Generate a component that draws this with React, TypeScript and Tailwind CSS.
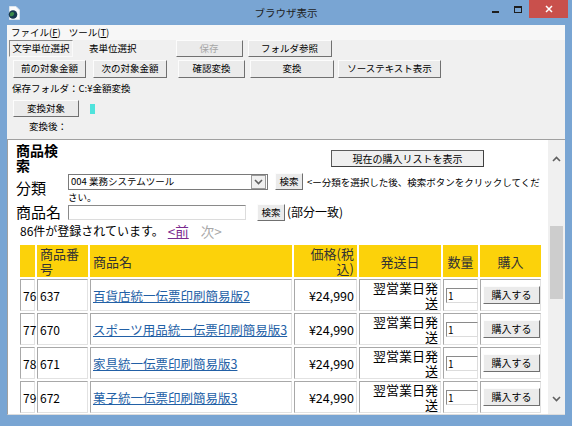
import React from 'react';

const btn3d =
  'border border-t-[#fcfcfc] border-l-[#fcfcfc] border-r-[#707070] border-b-[#707070] bg-[#ebebeb] flex items-center justify-center leading-none';

const items = [
  { no: 76, code: '637', name: '百貨店統一伝票印刷簡易版2' },
  { no: 77, code: '670', name: 'スポーツ用品統一伝票印刷簡易版3' },
  { no: 78, code: '671', name: '家具統一伝票印刷簡易版3' },
  { no: 79, code: '672', name: '菓子統一伝票印刷簡易版3' },
];

const cell = 'border border-t-[#a8a8a8] border-l-[#a8a8a8] border-r-[#e2e2e2] border-b-[#e2e2e2] px-[2px] align-middle';
const head = 'bg-[#fcd20a] border border-[#fcd20a] px-[2px] font-normal text-[#333] align-middle';

function Chevron({ up }: { up?: boolean }) {
  return (
    <svg width="9" height="6" viewBox="0 0 9 6">
      <path d={up ? 'M1 5L4.5 1.5L8 5' : 'M1 1L4.5 4.5L8 1'} fill="none" stroke="#606060" strokeWidth="1.6" />
    </svg>
  );
}

export default function App() {
  return (
    <div className="w-[572px] h-[426px] bg-[#79a5d3] flex flex-col overflow-hidden font-['Noto_Sans_CJK_JP',sans-serif] text-black">
      {/* title bar */}
      <div className="h-[25px] shrink-0 grid grid-cols-[1fr_auto_1fr]">
        <div className="flex items-start pt-[6px] pl-[8px]">
          <svg width="12" height="14" viewBox="0 0 12 14">
            <path d="M1.5 0.5h6.5l3.5 3.5v9.5h-10z" fill="#fbfbfb" stroke="#d9e4ee" />
            <circle cx="5" cy="8.5" r="4.3" fill="#17384f" />
            <path d="M2.2 7c1.2-1.3 2.8-1.4 3.6-0.4s0.3 2.6-1.2 3.3-2.6 0.4-2.7-0.9z" fill="#3b8a4a" />
          </svg>
        </div>
        <div className="text-[10.5px] text-[#1e1e1e] pt-[6px] leading-[13px]">ブラウザ表示</div>
        <div className="flex justify-end items-start pr-[4px]">
          <div className="w-[7px] h-[2px] bg-[#1e1e1e] mt-[11px]" />
          <div className="w-[8px] h-[7px] border border-[#1e1e1e] border-t-2 ml-[15px] mt-[6px]" />
          <div className="w-[39px] h-[18px] bg-[#c9504c] ml-[7px] flex items-center justify-center">
            <svg width="8" height="8" viewBox="0 0 8 8">
              <path d="M1 1L7 7M7 1L1 7" stroke="#fff" strokeWidth="1.5" />
            </svg>
          </div>
        </div>
      </div>

      {/* client */}
      <div className="mx-[7px] h-[390px] shrink-0 overflow-hidden bg-[#f0f0f0] flex flex-col text-[9.5px]">
        <div className="h-[15px] shrink-0 bg-[#f7f7f7] flex items-center pl-[4px] gap-[8px] text-[9.5px] leading-none">
          <span>ファイル(<span className="underline">F</span>)</span>
          <span>ツール(<span className="underline">T</span>)</span>
        </div>

        <div className="h-[17px] shrink-0 flex items-stretch">
          <div className="ml-[2px] w-[64px] border border-[#8a8a8a] border-r-[#fafafa] border-b-[#fafafa] flex items-center justify-center leading-none">文字単位選択</div>
          <div className="ml-[16px] flex items-center leading-none">表単位選択</div>
          <div className={`${btn3d} ml-[39px] w-[67px] text-[#a6a6a6]`}>保存</div>
          <div className={`${btn3d} ml-[5px] w-[84px]`}>フォルダ参照</div>
        </div>

        <div className="h-[18px] shrink-0 mt-[3px] flex">
          <div className={`${btn3d} ml-[6px] w-[73px]`}>前の対象金額</div>
          <div className={`${btn3d} ml-[7px] w-[74px]`}>次の対象金額</div>
          <div className={`${btn3d} ml-[11px] w-[67px]`}>確認変換</div>
          <div className={`${btn3d} ml-[5px] w-[84px]`}>変換</div>
          <div className={`${btn3d} ml-[4px] w-[103px]`}>ソーステキスト表示</div>
        </div>

        <div className="h-[15px] shrink-0 mt-[3px] pl-[5px] flex items-center leading-none">保存フォルダ：C:¥金額変換</div>

        <div className="h-[17px] shrink-0 mt-[4px] flex items-center">
          <div className={`${btn3d} ml-[6px] w-[66px] h-full`}>変換対象</div>
          <div className="ml-[11px] w-[5px] h-[10px] bg-[#4fe3dc]" />
        </div>

        <div className="h-[15px] shrink-0 mt-[2px] pl-[22px] flex items-center leading-none">変換後：</div>

        {/* browser pane */}
        <div className="mt-[5px] flex-1 min-h-0 overflow-hidden flex border-t border-l border-b border-[#a0a0a0] border-b-[#dcdcdc] bg-white">
          <div className="flex-1 min-w-0 overflow-hidden">
            <div className="flex pl-[8px] pt-[3px]">
              <div className="w-[48px] text-[14px] font-bold leading-[15px]">商品検索</div>
              <div className="ml-[267px] mt-[7px] w-[153px] h-[17px] border border-[#5a5a5a] border-r-[#404040] border-b-[#404040] bg-[#efefef] flex items-center justify-center text-[10px] leading-none">
                現在の購入リストを表示
              </div>
            </div>

            <div className="flex pl-[8px]">
              <div className="w-[52px] text-[15px] leading-[16px] pt-[7px]">分類</div>
              <div className="w-[473px] text-[9.5px] leading-[12px]">
                <span className="inline-flex align-middle w-[200px] h-[16px] border border-[#7a7a7a] bg-white items-center">
                  <span className="pl-[2px] flex-1 leading-none">004 業務システムツール</span>
                  <span className="w-[15px] h-[14px] mr-[1px] border border-[#9a9a9a] bg-[#f0f0f0] flex items-center justify-center">
                    <Chevron />
                  </span>
                </span>
                <span className="inline-flex align-middle ml-[7px] w-[28px] h-[17px] border border-t-[#fcfcfc] border-l-[#fcfcfc] border-r-[#707070] border-b-[#707070] bg-[#ebebeb] items-center justify-center leading-none">
                  検索
                </span>
                <span className="ml-[4px] align-middle">&lt;ー分類を選択した後、検索ボタンをクリックしてください。</span>
              </div>
            </div>

            <div className="flex pl-[8px] items-center">
              <div className="w-[52px] text-[15px] leading-[18px]">商品名</div>
              <div className="w-[178px] h-[15px] border border-[#8a8a8a] border-r-[#dcdcdc] border-b-[#dcdcdc] bg-white" />
              <div className={`${btn3d} ml-[11px] w-[28px] h-[17px]`}>検索</div>
              <div className="ml-[2px] text-[12px] leading-[14px]">(部分一致)</div>
            </div>

            <div className="flex items-center pl-[12px] mt-[2px] h-[16px] text-[12px] leading-none">
              <span>86件が登録されています。</span>
              <span className="ml-[4px] text-[#7a2a8e] underline text-[13.5px]">&lt;前</span>
              <span className="ml-[12px] text-[#a8a8a8] text-[13.5px]">次&gt;</span>
            </div>

            <table className="mt-[4px] ml-[10px] w-[525px] table-fixed border-separate border-spacing-[2px] text-[13px] leading-[15px]">
              <thead>
                <tr className="h-[32px]">
                  <th className={`${head} w-[15px]`}></th>
                  <th className={`${head} w-[51px] text-left`}>商品番号</th>
                  <th className={`${head} w-[202px] text-left`}>商品名</th>
                  <th className={`${head} w-[63px] text-right`}>価格(税込)</th>
                  <th className={`${head} w-[82px] text-center`}>発送日</th>
                  <th className={`${head} w-[35px] text-center`}>数量</th>
                  <th className={`${head} w-[61px] text-center`}>購入</th>
                </tr>
              </thead>
              <tbody>
                {items.map((it) => (
                  <tr key={it.no} className="h-[32px]">
                    <td className={`${cell} px-[1px] text-[12px]`}>{it.no}</td>
                    <td className={`${cell} text-[12px]`}>{it.code}</td>
                    <td className={`${cell} whitespace-nowrap`}>
                      <span className="text-[#2260a6] underline text-[12.5px]">{it.name}</span>
                    </td>
                    <td className={`${cell} text-right text-[12.5px]`}>¥24,990</td>
                    <td className={`${cell} text-right`}>翌営業日発送</td>
                    <td className={`${cell} px-[1px]`}>
                      <div className="w-[32px] h-[15px] border border-[#8a8a8a] border-r-[#dcdcdc] border-b-[#dcdcdc] bg-white text-[10px] leading-[13px] pl-[1px]">1</div>
                    </td>
                    <td className={`${cell} px-[1px]`}>
                      <div className={`${btn3d} w-[57px] h-[18px] text-[10px]`}>購入する</div>
                    </td>
                  </tr>
                ))}
                <tr className="h-[32px]">
                  <td className={cell}></td>
                  <td className={cell}></td>
                  <td className={cell}></td>
                  <td className={cell}></td>
                  <td className={cell}></td>
                  <td className={cell}></td>
                  <td className={cell}></td>
                </tr>
              </tbody>
            </table>
          </div>

          {/* scrollbar */}
          <div className="w-[17px] shrink-0 bg-[#f0f0f0] flex flex-col items-center">
            <div className="mt-[16px]">
              <Chevron up />
            </div>
            <div className="mt-[64px] w-[13px] h-[73px] bg-[#cdcdcd]" />
            <div className="flex-1" />
            <div className="mb-[12px]">
              <Chevron />
            </div>
          </div>
        </div>
      </div>
    </div>
  );
}
